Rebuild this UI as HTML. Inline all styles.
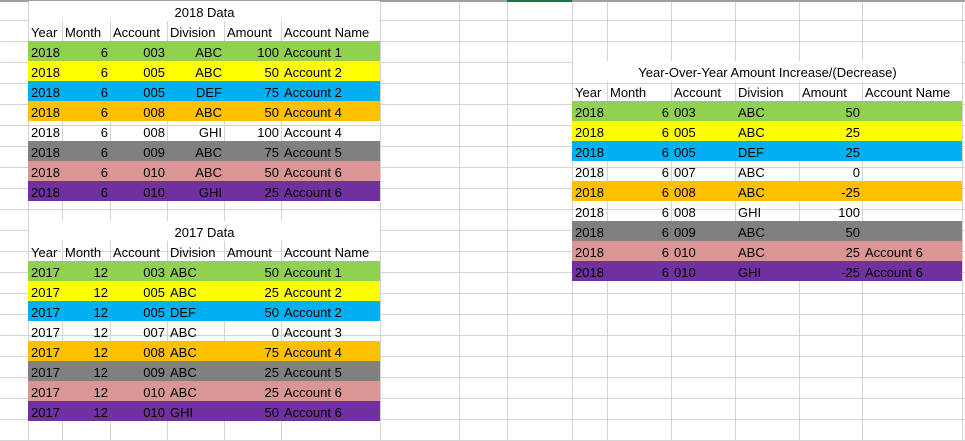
<!DOCTYPE html>
<html><head><meta charset="utf-8"><style>
*{margin:0;padding:0;box-sizing:border-box}
body{width:965px;height:441px;position:relative;overflow:hidden;background:#fff;font-family:"Liberation Sans",Arial,sans-serif;font-size:13px;color:#000}
.grid{position:absolute;left:0;top:0;width:965px;height:441px;background:repeating-linear-gradient(to bottom,transparent 0,transparent 20px,#d4d4d4 20px,#d4d4d4 21px);background-position:0 0}
.v{position:absolute;top:0;width:1px;height:441px;background:#d4d4d4}
.row{position:absolute;height:20px;display:flex;line-height:23px;white-space:nowrap}
.row span{display:block;padding:0 2px 0 3px;overflow:visible}
.r{text-align:right}.l{text-align:left}.c{text-align:center}
.g{background:#92D050}.y{background:#FFFF00}.b{background:#00B0F0}.o{background:#FFC000}.gr{background:#808080}.p{background:#DA9694}.pu{background:#7030A0}
.L span:nth-child(1){width:34px}.L span:nth-child(2){width:48px}.L span:nth-child(3){width:57px}.L span:nth-child(4){width:57px}.L span:nth-child(5){width:57px}.L span:nth-child(6){width:99px}
.R span:nth-child(1){width:35px}.R span:nth-child(2){width:64px}.R span:nth-child(3){width:64px}.R span:nth-child(4){width:64px}.R span:nth-child(5){width:63px}.R span:nth-child(6){width:100px}
.t{position:absolute;height:20px;background:#fff;text-align:center;line-height:23px}
</style></head><body>
<div class="grid"></div>
<div class="v" style="left:28px"></div><div class="v" style="left:62px"></div><div class="v" style="left:110px"></div><div class="v" style="left:167px"></div><div class="v" style="left:224px"></div><div class="v" style="left:281px"></div><div class="v" style="left:380px"></div><div class="v" style="left:459px"></div><div class="v" style="left:507px"></div><div class="v" style="left:572px"></div><div class="v" style="left:607px"></div><div class="v" style="left:671px"></div><div class="v" style="left:735px"></div><div class="v" style="left:799px"></div><div class="v" style="left:862px"></div><div class="v" style="left:962px"></div>
<div style="position:absolute;left:0;top:0;width:965px;height:2px;background:#a0a0a0"></div>
<div style="position:absolute;left:507px;top:0;width:65px;height:2px;background:#217346"></div>

<div class="t" style="left:29px;top:1px;width:351px">2018 Data</div>
<div class="row L" style="left:28px;top:21px"><span class="l">Year</span><span class="l">Month</span><span class="l">Account</span><span class="l">Division</span><span class="l">Amount</span><span class="l">Account Name</span></div>
<div class="row L g" style="left:28px;top:41px"><span class="l">2018</span><span class="r">6</span><span class="r">003</span><span class="r">ABC</span><span class="r">100</span><span class="l">Account 1</span></div>
<div class="row L y" style="left:28px;top:61px"><span class="l">2018</span><span class="r">6</span><span class="r">005</span><span class="r">ABC</span><span class="r">50</span><span class="l">Account 2</span></div>
<div class="row L b" style="left:28px;top:81px"><span class="l">2018</span><span class="r">6</span><span class="r">005</span><span class="r">DEF</span><span class="r">75</span><span class="l">Account 2</span></div>
<div class="row L o" style="left:28px;top:101px"><span class="l">2018</span><span class="r">6</span><span class="r">008</span><span class="r">ABC</span><span class="r">50</span><span class="l">Account 4</span></div>
<div class="row L" style="left:28px;top:121px"><span class="l">2018</span><span class="r">6</span><span class="r">008</span><span class="r">GHI</span><span class="r">100</span><span class="l">Account 4</span></div>
<div class="row L gr" style="left:28px;top:141px"><span class="l">2018</span><span class="r">6</span><span class="r">009</span><span class="r">ABC</span><span class="r">75</span><span class="l">Account 5</span></div>
<div class="row L p" style="left:28px;top:161px"><span class="l">2018</span><span class="r">6</span><span class="r">010</span><span class="r">ABC</span><span class="r">50</span><span class="l">Account 6</span></div>
<div class="row L pu" style="left:28px;top:181px"><span class="l">2018</span><span class="r">6</span><span class="r">010</span><span class="r">GHI</span><span class="r">25</span><span class="l">Account 6</span></div>

<div class="t" style="left:29px;top:221px;width:351px">2017 Data</div>
<div class="row L" style="left:28px;top:241px"><span class="l">Year</span><span class="l">Month</span><span class="l">Account</span><span class="l">Division</span><span class="l">Amount</span><span class="l">Account Name</span></div>
<div class="row L g" style="left:28px;top:261px"><span class="l">2017</span><span class="r">12</span><span class="r">003</span><span class="l">ABC</span><span class="r">50</span><span class="l">Account 1</span></div>
<div class="row L y" style="left:28px;top:281px"><span class="l">2017</span><span class="r">12</span><span class="r">005</span><span class="l">ABC</span><span class="r">25</span><span class="l">Account 2</span></div>
<div class="row L b" style="left:28px;top:301px"><span class="l">2017</span><span class="r">12</span><span class="r">005</span><span class="l">DEF</span><span class="r">50</span><span class="l">Account 2</span></div>
<div class="row L" style="left:28px;top:321px"><span class="l">2017</span><span class="r">12</span><span class="r">007</span><span class="l">ABC</span><span class="r">0</span><span class="l">Account 3</span></div>
<div class="row L o" style="left:28px;top:341px"><span class="l">2017</span><span class="r">12</span><span class="r">008</span><span class="l">ABC</span><span class="r">75</span><span class="l">Account 4</span></div>
<div class="row L gr" style="left:28px;top:361px"><span class="l">2017</span><span class="r">12</span><span class="r">009</span><span class="l">ABC</span><span class="r">25</span><span class="l">Account 5</span></div>
<div class="row L p" style="left:28px;top:381px"><span class="l">2017</span><span class="r">12</span><span class="r">010</span><span class="l">ABC</span><span class="r">25</span><span class="l">Account 6</span></div>
<div class="row L pu" style="left:28px;top:401px"><span class="l">2017</span><span class="r">12</span><span class="r">010</span><span class="l">GHI</span><span class="r">50</span><span class="l">Account 6</span></div>

<div class="t" style="left:573px;top:61px;width:389px">Year-Over-Year Amount Increase/(Decrease)</div>
<div class="row R" style="left:572px;top:81px"><span class="l">Year</span><span class="l">Month</span><span class="l">Account</span><span class="l">Division</span><span class="l">Amount</span><span class="l">Account Name</span></div>
<div class="row R g" style="left:572px;top:101px"><span class="l">2018</span><span class="r">6</span><span class="l">003</span><span class="l">ABC</span><span class="r">50</span><span class="l"></span></div>
<div class="row R y" style="left:572px;top:121px"><span class="l">2018</span><span class="r">6</span><span class="l">005</span><span class="l">ABC</span><span class="r">25</span><span class="l"></span></div>
<div class="row R b" style="left:572px;top:141px"><span class="l">2018</span><span class="r">6</span><span class="l">005</span><span class="l">DEF</span><span class="r">25</span><span class="l"></span></div>
<div class="row R" style="left:572px;top:161px"><span class="l">2018</span><span class="r">6</span><span class="l">007</span><span class="l">ABC</span><span class="r">0</span><span class="l"></span></div>
<div class="row R o" style="left:572px;top:181px"><span class="l">2018</span><span class="r">6</span><span class="l">008</span><span class="l">ABC</span><span class="r">-25</span><span class="l"></span></div>
<div class="row R" style="left:572px;top:201px"><span class="l">2018</span><span class="r">6</span><span class="l">008</span><span class="l">GHI</span><span class="r">100</span><span class="l"></span></div>
<div class="row R gr" style="left:572px;top:221px"><span class="l">2018</span><span class="r">6</span><span class="l">009</span><span class="l">ABC</span><span class="r">50</span><span class="l"></span></div>
<div class="row R p" style="left:572px;top:241px"><span class="l">2018</span><span class="r">6</span><span class="l">010</span><span class="l">ABC</span><span class="r">25</span><span class="l">Account 6</span></div>
<div class="row R pu" style="left:572px;top:261px"><span class="l">2018</span><span class="r">6</span><span class="l">010</span><span class="l">GHI</span><span class="r">-25</span><span class="l">Account 6</span></div>
</body></html>
